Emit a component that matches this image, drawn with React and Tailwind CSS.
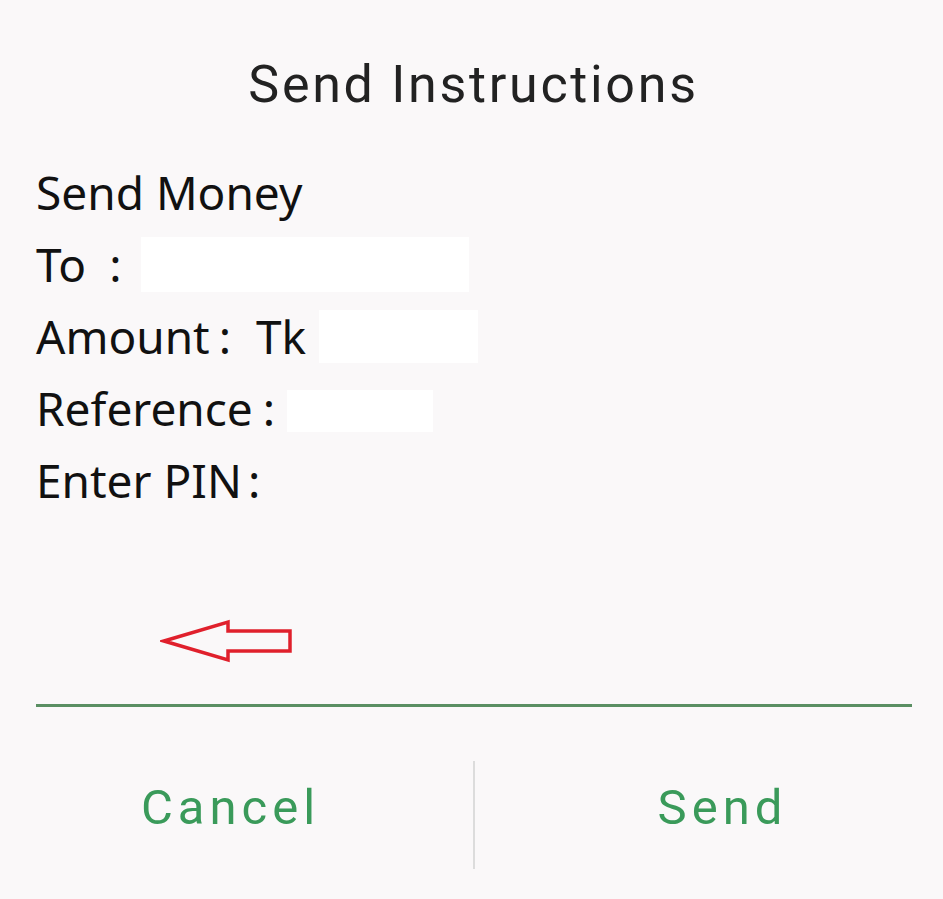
import React from 'react';

function Blank({ className }) {
  return <span className={`inline-block bg-white ${className}`} />;
}

function Colon({ className = '' }) {
  return <span className={`inline-block ${className}`}>:</span>;
}

export default function App() {
  return (
    <div className="w-[943px] h-[899px] bg-[#faf8f9] flex flex-col" style={{ fontFamily: '"Noto Sans", Roboto, sans-serif' }}>
      {/* Title */}
      <div className="h-[160px] flex items-center justify-center pt-[10px]">
        <h2 className="text-[52px] text-[#222] tracking-[2.7px] pl-[4px]" style={{ fontFamily: 'Roboto, sans-serif' }}>Send Instructions</h2>
      </div>

      {/* Message body */}
      <div className="px-[36px] text-[#111] text-[46px] leading-[72px] -mt-[4px]">
        <div>Send Money</div>
        <div className="flex items-center">
          <span>To</span>
          <Colon className="ml-[23px]" />
          <Blank className="w-[328px] h-[55px] ml-[19px]" />
        </div>
        <div className="flex items-center">
          <span>Amount</span>
          <Colon className="ml-[9px]" />
          <span className="ml-[25px]">Tk</span>
          <Blank className="w-[159px] h-[53px] ml-[13px]" />
        </div>
        <div className="flex items-center">
          <span>Reference</span>
          <Colon className="ml-[10px]" />
          <Blank className="w-[146px] h-[42px] ml-[12px] mt-[6px]" />
        </div>
        <div className="flex items-center">
          <span>Enter PIN</span>
          <Colon className="ml-[6px]" />
        </div>
      </div>

      {/* Arrow */}
      <div className="pl-[160px] pt-[103px]">
        <svg width="136" height="44" viewBox="0 0 136 44" className="block">
          <path d="M4 22 L68 3 L68 12 L130 12 L130 32 L68 32 L68 41 Z" fill="none" stroke="#e0202c" strokeWidth="3.5" strokeLinejoin="miter" />
        </svg>
      </div>

      {/* Input underline */}
      <div className="ml-[36px] mr-[31px] mt-[41px] h-[3px] bg-[#5a8f63]" />

      {/* Buttons */}
      <div className="flex mt-[54px] h-[108px]">
        <button className="w-[473px] self-start mt-[10px] text-[49px] tracking-[5px] text-[#3a9a5a] pr-[12px]" style={{ fontFamily: 'Roboto, sans-serif' }}>Cancel</button>
        <div className="w-[2px] h-full bg-[#dcdcdc]" />
        <button className="w-[468px] self-start mt-[10px] text-[49px] tracking-[5px] text-[#3a9a5a] pl-[27px]" style={{ fontFamily: 'Roboto, sans-serif' }}>Send</button>
      </div>
    </div>
  );
}
